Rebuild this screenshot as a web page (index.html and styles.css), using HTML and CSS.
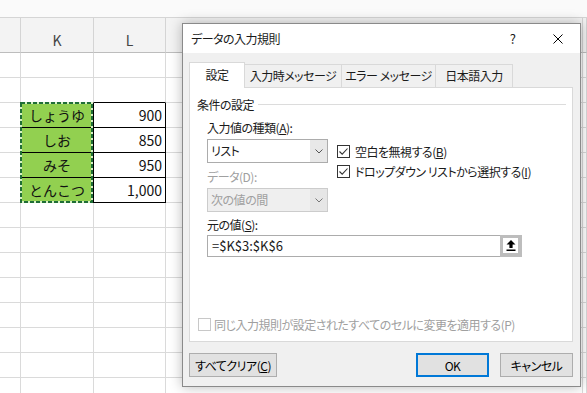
FILE: index.html
```html
<!DOCTYPE html>
<html lang="ja">
<head>
	<meta charset="UTF-8">
	<title>データの入力規則</title>
	<link rel="stylesheet" href="styles.css">
</head>
<body>
	<div class="sheet">
		<div class="strip"></div>

		<div class="c hd"></div><div class="c hd">K</div><div class="c hd">L</div><div class="c hd"></div><div class="c hd"></div>

		<div class="c"></div><div class="c"></div><div class="c"></div><div class="c"></div><div class="c"></div>
		<div class="c"></div><div class="c edge"></div><div class="c edge"></div><div class="c"></div><div class="c"></div>

		<div class="c lead"></div><div class="c name">しょうゆ</div><div class="c num">900</div><div class="c"></div><div class="c"></div>
		<div class="c lead"></div><div class="c name">しお</div><div class="c num">850</div><div class="c"></div><div class="c"></div>
		<div class="c lead"></div><div class="c name">みそ</div><div class="c num">950</div><div class="c"></div><div class="c"></div>
		<div class="c lead"></div><div class="c name">とんこつ</div><div class="c num">1,000</div><div class="c"></div><div class="c"></div>

		<div class="c"></div><div class="c"></div><div class="c"></div><div class="c"></div><div class="c"></div>
		<div class="c"></div><div class="c"></div><div class="c"></div><div class="c"></div><div class="c"></div>
		<div class="c"></div><div class="c"></div><div class="c"></div><div class="c"></div><div class="c"></div>
		<div class="c"></div><div class="c"></div><div class="c"></div><div class="c"></div><div class="c"></div>
		<div class="c"></div><div class="c"></div><div class="c"></div><div class="c"></div><div class="c"></div>
		<div class="c"></div><div class="c"></div><div class="c"></div><div class="c"></div><div class="c"></div>
		<div class="c"></div><div class="c"></div><div class="c"></div><div class="c"></div><div class="c"></div>
		<div class="c"></div><div class="c"></div><div class="c"></div><div class="c"></div><div class="c"></div>
	</div>

	<!-- コピー範囲の点線 -->
	<svg class="marquee" width="74" height="102" viewBox="0 0 74 102">
		<rect x="1" y="1" width="71" height="99" fill="none" stroke="#d9f0c4" stroke-width="2"/>
		<rect x="1" y="1" width="71" height="99" fill="none" stroke="#1f6e36" stroke-width="2" stroke-dasharray="4 2"/>
	</svg>

	<div class="dialog">
		<div class="titlebar">
			<span class="title">データの入力規則</span>
			<span class="tbtn help">?</span>
			<span class="tbtn">
				<svg width="10" height="10" viewBox="0 0 10 10"><path d="M0.5 0.5L9.5 9.5M9.5 0.5L0.5 9.5" stroke="#000" stroke-width="1"/></svg>
			</span>
		</div>

		<div class="body">
			<div class="tabs">
				<div class="tab active">設定</div>
				<div class="tab">入力時メッセージ</div>
				<div class="tab">エラー メッセージ</div>
				<div class="tab">日本語入力</div>
			</div>

			<div class="panel">
				<div class="legend"><span>条件の設定</span><i class="rule"></i></div>

				<div class="fields">
					<div class="split">
						<div class="left">
							<span class="label">入力値の種類(<u>A</u>):</span>
							<div class="select">
								<span class="select-text">リスト</span>
								<span class="select-btn">
									<svg width="8" height="5" viewBox="0 0 8 5"><path d="M0.5 0.5L4 4L7.5 0.5" fill="none" stroke="#555" stroke-width="1"/></svg>
								</span>
							</div>
							<span class="label off">データ(D):</span>
							<div class="select disabled">
								<span class="select-text">次の値の間</span>
								<span class="select-btn">
									<svg width="8" height="5" viewBox="0 0 8 5"><path d="M0.5 0.5L4 4L7.5 0.5" fill="none" stroke="#777" stroke-width="1"/></svg>
								</span>
							</div>
						</div>
						<div class="right">
							<div class="check">
								<span class="box"><svg width="11" height="11" viewBox="0 0 11 11"><path d="M1.5 5.5L4.2 8.2L9.5 2.5" fill="none" stroke="#333" stroke-width="1.1"/></svg></span>
								<span>空白を無視する(<u>B</u>)</span>
							</div>
							<div class="check">
								<span class="box"><svg width="11" height="11" viewBox="0 0 11 11"><path d="M1.5 5.5L4.2 8.2L9.5 2.5" fill="none" stroke="#333" stroke-width="1.1"/></svg></span>
								<span>ドロップダウン リストから選択する(<u>I</u>)</span>
							</div>
						</div>
					</div>

					<span class="label source">元の値(<u>S</u>):</span>
					<div class="inputrow">
						<span class="input">=$K$3:$K$6</span>
						<span class="pick">
							<span class="pick-in">
								<svg width="10" height="11" viewBox="0 0 10 11"><path d="M5 0L9.5 4.5H6.6V8H3.4V4.5H0.5Z" fill="#000"/><rect x="0.5" y="9.5" width="9" height="1.5" fill="#000"/></svg>
							</span>
						</span>
					</div>
				</div>

				<div class="apply">
					<span class="box off"></span>
					<span>同じ入力規則が設定されたすべてのセルに変更を適用する(P)</span>
				</div>
			</div>

			<div class="actions">
				<button class="btn clear">すべてクリア(<u>C</u>)</button>
				<span class="spacer"></span>
				<button class="btn ok">OK</button>
				<button class="btn cancel">キャンセル</button>
			</div>
		</div>
	</div>
</body>
</html>
```

FILE: styles.css
```css
* {
  box-sizing: border-box;
}
body {
  margin: 0;
  width: 587px;
  height: 393px;
  overflow: hidden;
  position: relative;
  background: #fff;
  font-family: "Noto Sans CJK JP", "Liberation Sans", sans-serif;
  color: #000;
}

/* シート */
.sheet {
  display: grid;
  grid-template-columns: 21px 73px 72px 417px 4px;
  grid-template-rows: 18px 35px;
  grid-auto-rows: 25px;
}
.strip {
  grid-column: 1 / -1;
  background: #fafafa;
  border-bottom: 1px solid #d5d5d5;
}
.c {
  border-right: 1px solid #dadada;
  border-bottom: 1px solid #dadada;
  font-size: 14px;
  line-height: 24px;
  white-space: nowrap;
  color: #111;
}
.hd {
  background: #f3f3f3;
  border-right-color: #d4d4d4;
  border-bottom-color: #bdbdbd;
  text-align: center;
  color: #444;
  padding-top: 7px;
  line-height: 30px;
}
.edge {
  border-bottom-color: #000;
}
.lead {
  border-right-color: #000;
}
.name {
  background: #92d050;
  text-align: center;
  border-color: #000;
}
.num {
  text-align: right;
  padding-right: 3px;
  border-color: #000;
}
.marquee {
  position: absolute;
  left: 20px;
  top: 102px;
}

/* ダイアログ */
.dialog {
  position: absolute;
  left: 182px;
  top: 23px;
  width: 399px;
  height: 364px;
  border: 1px solid #8a8a8a;
  background: #f0f0f0;
  box-shadow: 0 0 12px rgba(0, 0, 0, 0.28);
  display: flex;
  flex-direction: column;
  font-size: 12px;
  letter-spacing: -0.5px;
  font-feature-settings: "palt";
  color: #1a1a1a;
}
.titlebar {
  height: 29px;
  flex-shrink: 0;
  background: #fff;
  display: flex;
  align-items: center;
  padding-left: 8px;
}
.title {
  flex: 1;
}
.tbtn {
  width: 45px;
  height: 29px;
  display: flex;
  align-items: center;
  justify-content: center;
}
.help {
  font-size: 13px;
}
.body {
  flex: 1;
  display: flex;
  flex-direction: column;
  padding: 9px 7px 9px 6px;
}
.tabs {
  display: flex;
  align-items: flex-end;
  height: 25px;
}
.tab {
  height: 23px;
  border: 1px solid #d9d9d9;
  border-left: 0;
  border-bottom: 0;
  text-align: center;
  line-height: 21px;
  white-space: nowrap;
}
.tab:nth-child(2) { width: 97px; }
.tab:nth-child(3) { width: 94px; }
.tab:nth-child(4) { width: 77px; }
.tab.active {
  width: 56px;
  height: 26px;
  margin-bottom: -1px;
  border-left: 1px solid #d9d9d9;
  background: #fff;
  line-height: 24px;
  position: relative;
  z-index: 1;
}
.panel {
  height: 255px;
  flex-shrink: 0;
  background: #fff;
  border: 1px solid #d9d9d9;
  display: flex;
  flex-direction: column;
  padding: 8px 6px 9px 7px;
}
.legend {
  height: 16px;
  display: flex;
  align-items: center;
  gap: 4px;
}
.rule {
  flex: 1;
  height: 1px;
  background: #dcdcdc;
}
.fields {
  padding-left: 10px;
}
.split {
  display: flex;
}
.left {
  width: 121px;
}
.label {
  display: block;
  line-height: 16px;
  margin-top: 8px;
  white-space: nowrap;
}
.label.off {
  margin-top: 6px;
  color: #a0a0a0;
}
.select {
  margin-top: 3px;
  height: 24px;
  border: 1px solid #acacac;
  background: #fff;
  display: flex;
}
.select-text {
  flex: 1;
  padding-left: 3px;
  line-height: 22px;
}
.select-btn {
  width: 17px;
  background: #e8e8e8;
  display: flex;
  align-items: center;
  justify-content: center;
}
.select.disabled {
  background: #efefef;
  border-color: #cccccc;
  color: #a0a0a0;
}
.select.disabled .select-btn {
  background: #e6e6e6;
}
.right {
  margin-left: 9px;
  padding-top: 29px;
}
.check {
  display: flex;
  align-items: center;
  height: 20px;
  gap: 5px;
  white-space: nowrap;
}
.box {
  width: 13px;
  height: 13px;
  border: 1px solid #333;
  background: #fff;
  display: flex;
  align-items: center;
  justify-content: center;
  flex-shrink: 0;
}
.box.off {
  border-color: #c8c8c8;
}
.label.source {
  margin-top: 5px;
}
.inputrow {
  margin-top: 2px;
  display: flex;
  height: 22px;
}
.input {
  width: 293px;
  border: 1px solid #acacac;
  border-right: 0;
  padding-left: 4px;
  font-size: 13px;
  line-height: 20px;
  letter-spacing: 0;
  font-feature-settings: normal;
}
.pick {
  width: 22px;
  height: 22px;
  background: #bdbdbd;
  padding: 3px 4px 4px 3px;
}
.pick-in {
  display: flex;
  width: 15px;
  height: 15px;
  background: #fff;
  align-items: center;
  justify-content: center;
}
.apply {
  margin-top: auto;
  display: flex;
  align-items: center;
  gap: 3px;
  height: 16px;
  padding-left: 1px;
  color: #a0a0a0;
  white-space: nowrap;
}
.actions {
  margin-top: 11px;
  display: flex;
  height: 24px;
}
.spacer {
  flex: 1;
}
.btn {
  height: 24px;
  border: 1px solid #adadad;
  background: #e1e1e1;
  font-family: inherit;
  font-size: 12px;
  letter-spacing: -0.5px;
  font-feature-settings: "palt";
  color: #000;
  padding: 0;
  white-space: nowrap;
}
.btn.clear {
  width: 88px;
}
.btn.ok {
  width: 73px;
  border: 2px solid #0078d7;
}
.btn.cancel {
  width: 73px;
  margin-left: 11px;
}
```
